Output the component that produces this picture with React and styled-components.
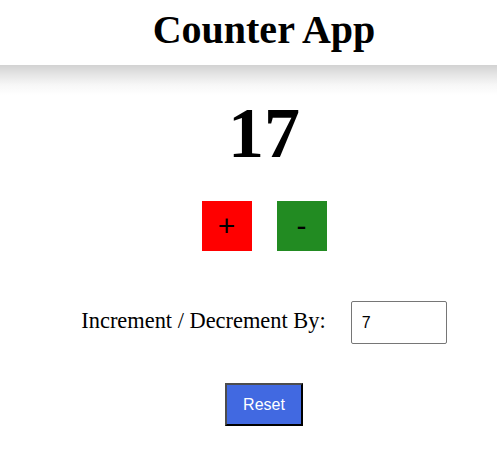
import React, { useState } from "react";
import styled, { createGlobalStyle } from "styled-components";

const GlobalStyle = createGlobalStyle`
  html, body {
    margin: 0;
    padding: 0;
    background: #ffffff;
  }
  body {
    font-family: "Liberation Serif", "Times New Roman", serif;
  }
`;

const Header = styled.header`
  height: 95px;
  box-sizing: border-box;
  padding: 7px 0 0 31px;
  background: linear-gradient(
    to bottom,
    #ffffff 0,
    #ffffff 65px,
    #d2d2d2 65px,
    #e6e6e6 75px,
    #f7f7f7 85px,
    #ffffff 95px
  );
  text-align: center;
`;

const Title = styled.h1`
  margin: 0;
  font-family: "Liberation Serif", "Times New Roman", serif;
  font-size: 40px;
  line-height: 46px;
  font-weight: bold;
  color: #000;
`;

const Main = styled.main`
  display: flex;
  flex-direction: column;
  align-items: center;
  padding-left: 31px;
`;

const Count = styled.div`
  margin-top: 2px;
  font-family: "Liberation Serif", "Times New Roman", serif;
  font-size: 72px;
  line-height: 72px;
  font-weight: bold;
  color: #000;
`;

const ButtonRow = styled.div`
  display: flex;
  gap: 25px;
  margin-top: 32px;
`;

const StepButton = styled.button`
  width: 50px;
  height: 50px;
  padding: 0;
  border: none;
  background: ${(p) => p.$bg};
  color: #000;
  font-family: "Liberation Sans", Arial, sans-serif;
  font-size: 30px;
  line-height: 1;
  cursor: pointer;
`;

const StepRow = styled.div`
  display: flex;
  align-items: baseline;
  gap: 25px;
  margin-top: 50px;
`;

const Label = styled.label`
  font-family: "Liberation Serif", "Times New Roman", serif;
  font-size: 22.4px;
  color: #000;
`;

const StepInput = styled.input`
  box-sizing: border-box;
  width: 96px;
  height: 43px;
  padding: 0 10px;
  border: 1px solid #767676;
  border-radius: 2px;
  font-family: "Liberation Sans", Arial, sans-serif;
  font-size: 16px;
  color: #000;
  background: #fff;
  outline: none;
`;

const ResetButton = styled.button`
  box-sizing: border-box;
  width: 78px;
  height: 43px;
  margin-top: 39px;
  padding: 0;
  background: #4169e1;
  color: #ffffff;
  font-family: "Liberation Sans", Arial, sans-serif;
  font-size: 16px;
  border: 2px solid;
  border-color: #4d4d4d #000000 #000000 #4d4d4d;
  cursor: pointer;
`;

export default function App() {
  const [count, setCount] = useState(17);
  const [step, setStep] = useState("7");
  const n = Number(step) || 0;

  return (
    <>
      <GlobalStyle />
      <Header>
        <Title>Counter App</Title>
      </Header>
      <Main>
        <Count>{count}</Count>
        <ButtonRow>
          <StepButton $bg="#ff0000" onClick={() => setCount(count + n)}>+</StepButton>
          <StepButton $bg="#228b22" onClick={() => setCount(count - n)}>-</StepButton>
        </ButtonRow>
        <StepRow>
          <Label htmlFor="step">Increment / Decrement By:</Label>
          <StepInput
            id="step"
            type="number"
            value={step}
            onChange={(e) => setStep(e.target.value)}
          />
        </StepRow>
        <ResetButton onClick={() => setCount(0)}>Reset</ResetButton>
      </Main>
    </>
  );
}
